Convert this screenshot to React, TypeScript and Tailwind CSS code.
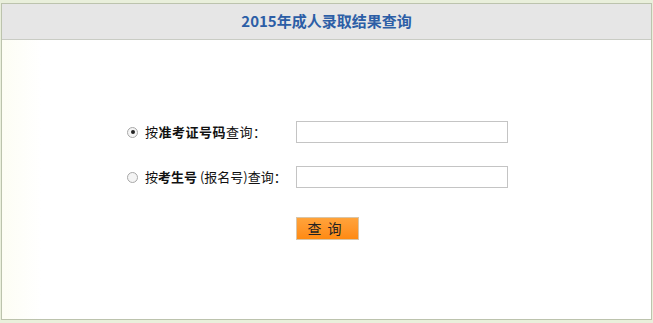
import { useState } from "react";

const cjk = { fontFamily: '"Noto Sans CJK SC", "Liberation Sans", sans-serif' };

function Radio({ checked, onClick }: { checked: boolean; onClick: () => void }) {
  return (
    <button
      type="button"
      onClick={onClick}
      className="flex h-[11px] w-[11px] shrink-0 items-center justify-center rounded-full border border-[#a8a8a8] bg-[#f4f4f4]"
    >
      {checked ? <span className="h-[4px] w-[4px] rounded-full bg-[#222]" /> : null}
    </button>
  );
}

export default function App() {
  const [mode, setMode] = useState<"ticket" | "exam">("ticket");

  return (
    <div className="h-[323px] w-[653px] bg-[#e9efdb] px-[1px] pb-[3px] pt-[3px]" style={cjk}>
      <div className="flex h-full flex-col border border-[#bcc3ad] bg-white">
        <div className="flex h-[36px] items-center justify-center border-b border-[#c9ccc4] bg-[#e6e6e6]">
          <h1 className="text-[15px] font-bold text-[#2c5ea6]">2015年成人录取结果查询</h1>
        </div>

        <div className="flex-1 bg-gradient-to-r from-[#fdfdf4] to-white to-[6%] pl-[125px] pt-[81px]">
          <div className="grid grid-cols-[169px_212px] items-center gap-y-[23px]">
            <label className="flex items-center gap-[7px] whitespace-nowrap text-[13px] tracking-[0.5px] text-[#111]">
              <Radio checked={mode === "ticket"} onClick={() => setMode("ticket")} />
              <span>
                按<b>准考证号码</b>查询：
              </span>
            </label>
            <input className="h-[22px] border border-[#c4c4c4] bg-white outline-none" />

            <label className="flex items-center gap-[7px] whitespace-nowrap text-[13px] text-[#111]">
              <Radio checked={mode === "exam"} onClick={() => setMode("exam")} />
              <span>
                按<b>考生号</b> (报名号)查询：
              </span>
            </label>
            <input className="h-[22px] border border-[#c4c4c4] bg-white outline-none" />

            <div />
            <div className="mt-[4px]">
              <button
                type="button"
                className="h-[23px] w-[63px] border border-[#d9c5a8] bg-gradient-to-b from-[#ffa33a] to-[#ff8a10] text-[14px] tracking-[6px] text-[#222]"
              >
                查询
              </button>
            </div>
          </div>
        </div>
      </div>
    </div>
  );
}
